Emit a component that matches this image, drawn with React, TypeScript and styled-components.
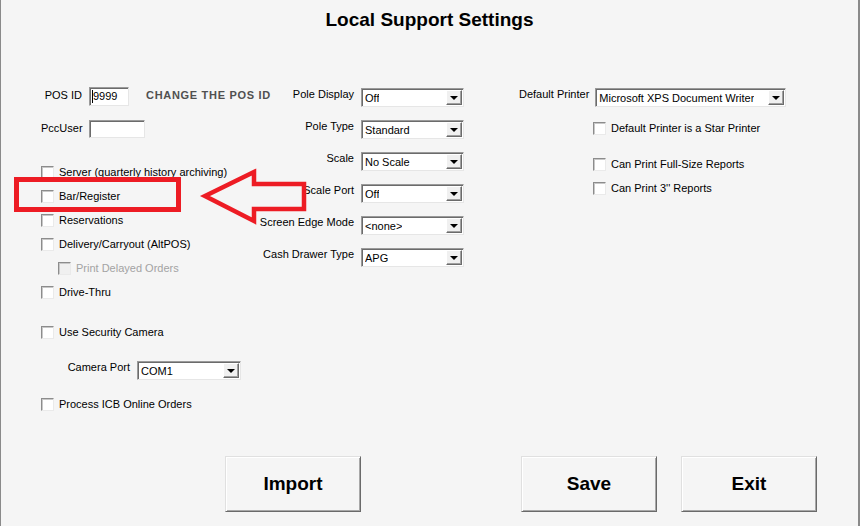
import React from "react";
import styled, { createGlobalStyle, css } from "styled-components";

const GlobalStyle = createGlobalStyle`
  html, body { margin: 0; padding: 0; background: #f5f5f5; }
  body { font-family: "Liberation Sans", Arial, sans-serif; }
  * { box-sizing: border-box; }
`;

const sunken = css`
  border: 1px solid;
  border-color: #9a9a9a #e6e6e6 #e6e6e6 #9a9a9a;
  box-shadow: inset 1px 1px 0 #6b6b6b;
  background: #ffffff;
`;

const Window = styled.div`
  position: relative;
  width: 860px;
  height: 526px;
  background: #f5f5f5;
  border-left: 1px solid #8a8a8a;
  border-right: 2px solid #8a8a8a;
  display: flex;
  flex-direction: column;
  color: #000;
  font-size: 11px;
  line-height: 13px;
`;

const Title = styled.h1`
  margin: 0;
  padding-top: 9px;
  text-align: center;
  font-size: 19px;
  line-height: 22px;
  font-weight: bold;
`;

const Body = styled.div`
  display: flex;
  align-items: flex-start;
  padding-left: 40px;
  margin-top: 56px;
`;

const LeftCol = styled.div`
  width: 214px;
  flex: none;
  display: flex;
  flex-direction: column;
`;

const FieldRow = styled.div<{ $top?: number }>`
  display: flex;
  align-items: flex-start;
  margin-top: ${(p) => p.$top ?? 0}px;
`;

const FieldLabel = styled.span<{ $w: number; $pt?: number }>`
  flex: none;
  width: ${(p) => p.$w}px;
  text-align: right;
  padding-top: ${(p) => p.$pt ?? 2}px;
  margin-right: 7px;
  white-space: nowrap;
`;

const TextInput = styled.div<{ $w: number; $h: number }>`
  ${sunken};
  flex: none;
  width: ${(p) => p.$w}px;
  height: ${(p) => p.$h}px;
  display: flex;
  align-items: center;
  padding-left: 2px;
  font-size: 11px;
`;

const Caret = styled.span`
  display: inline-block;
  width: 1px;
  height: 13px;
  background: #000;
`;

const Notice = styled.span`
  flex: none;
  margin-left: 17px;
  padding-top: 2px;
  font-weight: bold;
  font-size: 11px;
  letter-spacing: 0.7px;
  color: #505050;
  white-space: nowrap;
`;

const CheckList = styled.div<{ $top?: number }>`
  display: flex;
  flex-direction: column;
  margin-top: ${(p) => p.$top ?? 0}px;
`;

const CheckRow = styled.label<{ $top?: number; $indent?: number; $disabled?: boolean }>`
  display: flex;
  align-items: center;
  height: 24px;
  margin-top: ${(p) => p.$top ?? 0}px;
  padding-left: ${(p) => p.$indent ?? 0}px;
  color: ${(p) => (p.$disabled ? "#a3a3a3" : "#000")};
  white-space: nowrap;
`;

const Box = styled.span<{ $disabled?: boolean }>`
  width: 13px;
  height: 13px;
  flex: none;
  margin-right: 5px;
  border: 1px solid;
  border-color: #8c8c8c #eaeaea #eaeaea #8c8c8c;
  box-shadow: inset 1px 1px 0 #c8c8c8;
  background: ${(p) => (p.$disabled ? "#f0f0f0" : "#ffffff")};
`;

const MiddleCol = styled.div`
  flex: none;
  display: grid;
  grid-template-columns: 99px 103px;
  column-gap: 7px;
  row-gap: 13px;
  margin-top: 1px;
`;

const GridLabel = styled.span`
  text-align: right;
  white-space: nowrap;
`;

const SelectBox = styled.div<{ $w: number }>`
  ${sunken};
  flex: none;
  width: ${(p) => p.$w}px;
  height: 19px;
  display: flex;
  align-items: center;
  justify-content: space-between;
  padding: 1px 1px 1px 3px;
  font-size: 11px;
`;

const SelectValue = styled.span`
  white-space: nowrap;
  overflow: hidden;
  padding-top: 1px;
`;

const SelectButton = styled.span`
  width: 16px;
  height: 15px;
  flex: none;
  background: #f0f0f0;
  border: 1px solid;
  border-color: #ffffff #6b6b6b #6b6b6b #ffffff;
  box-shadow: inset -1px -1px 0 #a0a0a0;
  display: flex;
  align-items: center;
  justify-content: center;
  &::after {
    content: "";
    width: 0;
    height: 0;
    border-left: 4px solid transparent;
    border-right: 4px solid transparent;
    border-top: 4px solid #000;
    margin-top: 1px;
  }
`;

const RightCol = styled.div`
  flex: none;
  display: flex;
  flex-direction: column;
  margin-left: 55px;
  margin-top: 1px;
`;

const InlineRow = styled.div`
  display: flex;
  align-items: flex-start;
`;

const InlineLabel = styled.span`
  margin-right: 6px;
  white-space: nowrap;
`;

const ButtonRow = styled.div`
  margin-top: auto;
  display: flex;
  gap: 24px;
  padding-left: 224px;
  padding-bottom: 14px;
`;

const BigButton = styled.button<{ $push?: number }>`
  width: 136px;
  height: 56px;
  margin-right: ${(p) => p.$push ?? 0}px;
  background: #f5f5f5;
  border: 1px solid;
  border-color: #e0e0e0 #6a6a6a #6a6a6a #e0e0e0;
  box-shadow: inset 1px 1px 0 #ffffff, inset -1px -1px 0 #a8a8a8;
  font-family: "Liberation Sans", Arial, sans-serif;
  font-size: 19px;
  font-weight: bold;
  color: #000;
  padding: 0;
`;

const Overlay = styled.svg`
  position: absolute;
  left: -1px;
  top: 0;
  pointer-events: none;
`;

const Select = ({ value, w }: { value: string; w: number }) => (
  <SelectBox $w={w}>
    <SelectValue>{value}</SelectValue>
    <SelectButton />
  </SelectBox>
);

const Check = ({
  label,
  top,
  indent,
  disabled,
}: {
  label: string;
  top?: number;
  indent?: number;
  disabled?: boolean;
}) => (
  <CheckRow $top={top} $indent={indent} $disabled={disabled}>
    <Box $disabled={disabled} />
    {label}
  </CheckRow>
);

const middleRows: [string, string][] = [
  ["Pole Display", "Off"],
  ["Pole Type", "Standard"],
  ["Scale", "No Scale"],
  ["Scale Port", "Off"],
  ["Screen Edge Mode", "<none>"],
  ["Cash Drawer Type", "APG"],
];

export default function App() {
  return (
    <>
      <GlobalStyle />
      <Window>
        <Title>Local Support Settings</Title>
        <Body>
          <LeftCol>
            <FieldRow>
              <FieldLabel $w={41}>POS ID</FieldLabel>
              <TextInput $w={40} $h={19}>
                <Caret />
                9999
              </TextInput>
              <Notice>CHANGE THE POS ID</Notice>
            </FieldRow>
            <FieldRow $top={14}>
              <FieldLabel $w={41}>PccUser</FieldLabel>
              <TextInput $w={56} $h={18} />
            </FieldRow>
            <CheckList $top={22}>
              <Check label="Server (quarterly history archiving)" />
              <Check label="Bar/Register" />
              <Check label="Reservations" />
              <Check label="Delivery/Carryout (AltPOS)" />
              <Check label="Print Delayed Orders" indent={17} disabled />
              <Check label="Drive-Thru" />
              <Check label="Use Security Camera" top={16} />
            </CheckList>
            <FieldRow $top={17}>
              <FieldLabel $w={89} $pt={0}>Camera Port</FieldLabel>
              <Select value="COM1" w={104} />
            </FieldRow>
            <CheckList $top={12}>
              <Check label="Process ICB Online Orders" />
            </CheckList>
          </LeftCol>
          <MiddleCol>
            {middleRows.map(([label, value]) => (
              <React.Fragment key={label}>
                <GridLabel>{label}</GridLabel>
                <Select value={value} w={103} />
              </React.Fragment>
            ))}
          </MiddleCol>
          <RightCol>
            <InlineRow>
              <InlineLabel>Default Printer</InlineLabel>
              <Select value="Microsoft XPS Document Writer" w={191} />
            </InlineRow>
            <CheckList $top={9}>
              <CheckRow $indent={74}>
                <Box />
                Default Printer is a Star Printer
              </CheckRow>
              <CheckRow $indent={74} $top={12}>
                <Box />
                Can Print Full-Size Reports
              </CheckRow>
              <CheckRow $indent={74}>
                <Box />
                Can Print 3'' Reports
              </CheckRow>
            </CheckList>
          </RightCol>
        </Body>
        <ButtonRow>
          <BigButton $push={136}>Import</BigButton>
          <BigButton>Save</BigButton>
          <BigButton>Exit</BigButton>
        </ButtonRow>
        <Overlay width={860} height={526} viewBox="0 0 860 526">
          <rect x={16.5} y={179.5} width={162} height={30} fill="none" stroke="#ed1c24" strokeWidth={5} />
          <polygon
            points="205,196 254,172 254,184 304,184 304,209 254,209 254,221"
            fill="none"
            stroke="#ed1c24"
            strokeWidth={4.5}
            strokeLinejoin="miter"
          />
        </Overlay>
      </Window>
    </>
  );
}
